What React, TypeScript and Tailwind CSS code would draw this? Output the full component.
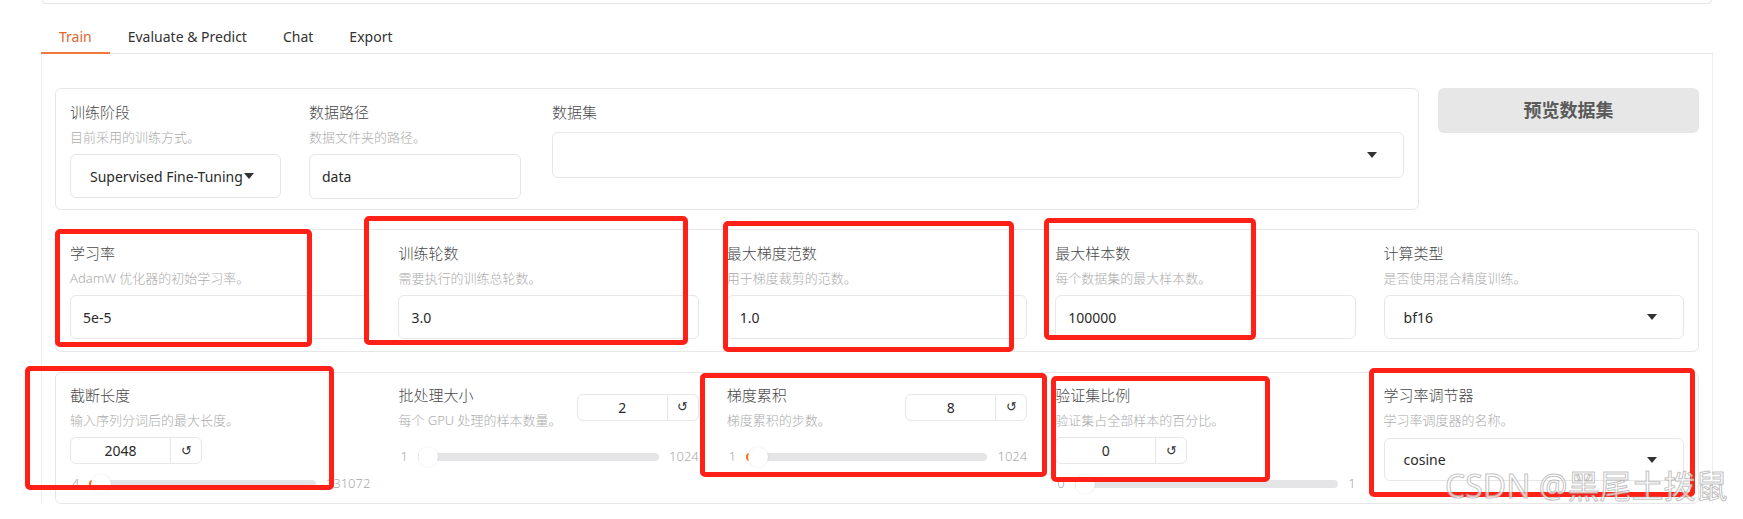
import React from "react"

const FONT = "font-['Noto_Sans','Noto_Sans_CJK_SC',sans-serif]"

function Arrow() {
  return (
    <svg width="10" height="6" viewBox="0 0 10 6" className="flex-none">
      <polygon points="0,0 10,0 5,6" fill="#333" />
    </svg>
  )
}

function Head({ label, info }: { label: string; info?: string }) {
  return (
    <div>
      <div className="text-[15px] font-light leading-[20px] text-[#4a4a4a]">{label}</div>
      {info && <div className="mt-[6px] text-[13px] font-light leading-[18px] text-[#ababab]">{info}</div>}
    </div>
  )
}

function TextBox({ value, h = "h-[44px]" }: { value: string; h?: string }) {
  return (
    <div className={`mt-[8px] flex ${h} items-center rounded-[6px] border border-[#e7e7e7] bg-white px-[12px] text-[14px] text-[#2a2a2a]`}>
      {value}
    </div>
  )
}

function Dropdown({ value, h = "h-[44px]", mt = "mt-[8px]" }: { value: string; h?: string; mt?: string }) {
  return (
    <div className={`${mt} flex ${h} items-center rounded-[6px] border border-[#e7e7e7] bg-white pl-[19px] pr-[26px] text-[14px] text-[#2a2a2a]`}>
      <span className="min-w-0 flex-1 whitespace-nowrap">{value}</span>
      <Arrow />
    </div>
  )
}

function NumBox({ value, w }: { value: string; w: string }) {
  return (
    <div className={`flex h-[27px] ${w} flex-none items-center rounded-[6px] border border-[#e7e7e7] bg-white text-[14px] text-[#2a2a2a]`}>
      <span className="flex-1 text-center">{value}</span>
      <span className="flex h-full w-[31px] items-center justify-center border-l border-[#e7e7e7] text-[13px] text-[#333]">↺</span>
    </div>
  )
}

function Slider({ min, max, thumb }: { min: string; max: string; thumb: number }) {
  return (
    <div className="flex h-[20px] items-center gap-[10px] text-[13px] font-light text-[#a8a8a8]">
      <span className="pl-[2px]">{min}</span>
      <div className="relative h-[8px] flex-1 rounded-full bg-[#e5e5e8]">
        <div className="h-full rounded-l-full bg-[#f97316]" style={{ width: thumb + 10 }} />
        <div
          className="absolute top-1/2 h-[20px] w-[20px] -translate-y-1/2 rounded-full bg-white shadow-[0_0_2px_rgba(0,0,0,0.12)]"
          style={{ left: thumb }}
        />
      </div>
      <span>{max}</span>
    </div>
  )
}

function SliderCol({ label, info, value, min, max, thumb, wrap }: {
  label: string; info: string; value: string; min: string; max: string; thumb: number; wrap?: boolean
}) {
  if (wrap) {
    return (
      <div>
        <Head label={label} info={info} />
        <div className="mt-[8px]"><NumBox value={value} w="w-[132px]" /></div>
        <div className="mt-[10px]"><Slider min={min} max={max} thumb={thumb} /></div>
      </div>
    )
  }
  return (
    <div>
      <div className="flex items-center justify-between">
        <Head label={label} info={info} />
        <NumBox value={value} w="w-[122px]" />
      </div>
      <div className="mt-[18px]"><Slider min={min} max={max} thumb={thumb} /></div>
    </div>
  )
}

const marks = [
  "left-[55px] top-[229px] w-[257px] h-[118px]",
  "left-[364px] top-[216px] w-[324px] h-[129px]",
  "left-[723px] top-[221px] w-[291px] h-[131px]",
  "left-[1044px] top-[218px] w-[212px] h-[122px]",
  "left-[25px] top-[366px] w-[309px] h-[124px]",
  "left-[700px] top-[373px] w-[347px] h-[104px]",
  "left-[1051px] top-[376px] w-[219px] h-[106px]",
  "left-[1369px] top-[368px] w-[326px] h-[129px]",
]

export default function App() {
  const tabs = ["Train", "Evaluate & Predict", "Chat", "Export"]
  return (
    <div className={`relative h-[519px] w-[1743px] overflow-hidden bg-white ${FONT}`}>
      <div className="ml-[41px] w-[1672px]">
        <div className="mx-[1px] h-[4px] rounded-b-[6px] border-x border-b border-[#e5e5e5]" />

        <div className="mt-[15px] flex h-[35px] border-b border-[#e5e5e5]">
          {tabs.map((t, i) => (
            <div
              key={t}
              className={`relative flex items-center px-[18px] text-[14px] ${i === 0 ? "text-[#e0662c]" : "text-[#333]"}`}
            >
              {t}
              {i === 0 && <div className="absolute bottom-[-1px] left-0 right-0 h-[2px] bg-[#f07a3a]" />}
            </div>
          ))}
        </div>

        <div className="flex flex-col gap-[19px] border-x border-[#efefef] px-[13px] pt-[34px]">
          <div className="flex gap-[19px]">
            <div className="flex h-[122px] flex-1 gap-[28px] rounded-[6px] border border-[#e7e7e7] px-[14px] pt-[13px]">
              <div className="w-[211px]">
                <Head label="训练阶段" info="目前采用的训练方式。" />
                <Dropdown value="Supervised Fine-Tuning" />
              </div>
              <div className="w-[212px]">
                <Head label="数据路径" info="数据文件夹的路径。" />
                <TextBox value="data" h="h-[45px]" />
              </div>
              <div className="ml-[3px] flex-1">
                <Head label="数据集" />
                <Dropdown value="" h="h-[46px]" mt="mt-[10px]" />
              </div>
            </div>
            <div className="flex h-[45px] w-[261px] items-center justify-center rounded-[6px] bg-[#e7e7e7] text-[18px] font-semibold text-[#5a5a5a]">
              预览数据集
            </div>
          </div>

          <div className="grid h-[123px] grid-cols-5 gap-x-[28px] rounded-[6px] border border-[#e7e7e7] px-[14px] pt-[13px]">
            <div>
              <Head label="学习率" info="AdamW 优化器的初始学习率。" />
              <TextBox value="5e-5" />
            </div>
            <div>
              <Head label="训练轮数" info="需要执行的训练总轮数。" />
              <TextBox value="3.0" />
            </div>
            <div>
              <Head label="最大梯度范数" info="用于梯度裁剪的范数。" />
              <TextBox value="1.0" />
            </div>
            <div>
              <Head label="最大样本数" info="每个数据集的最大样本数。" />
              <TextBox value="100000" />
            </div>
            <div>
              <Head label="计算类型" info="是否使用混合精度训练。" />
              <Dropdown value="bf16" />
            </div>
          </div>

          <div className="mt-[1px] grid h-[132px] grid-cols-5 gap-x-[28px] rounded-[6px] border border-[#e7e7e7] px-[14px] pt-[12px]">
            <SliderCol label="截断长度" info="输入序列分词后的最大长度。" value="2048" min="4" max="131072" thumb={2} wrap />
            <SliderCol label="批处理大小" info="每个 GPU 处理的样本数量。" value="2" min="1" max="1024" thumb={0} />
            <SliderCol label="梯度累积" info="梯度累积的步数。" value="8" min="1" max="1024" thumb={2} />
            <SliderCol label="验证集比例" info="验证集占全部样本的百分比。" value="0" min="0" max="1" thumb={0} wrap />
            <div>
              <Head label="学习率调节器" info="学习率调度器的名称。" />
              <Dropdown value="cosine" h="h-[43px]" mt="mt-[9px]" />
            </div>
          </div>
        </div>
      </div>

      {marks.map((m) => (
        <div key={m} className={`pointer-events-none absolute rounded-[5px] border-[5px] border-[#ff2117] ${m}`} />
      ))}

      <div className="pointer-events-none absolute left-[1445px] top-[466px] whitespace-nowrap text-[32px] leading-[40px] text-white/70 [-webkit-text-stroke:1px_rgba(140,140,140,0.55)]">
        CSDN @黑尾土拨鼠
      </div>
    </div>
  )
}
